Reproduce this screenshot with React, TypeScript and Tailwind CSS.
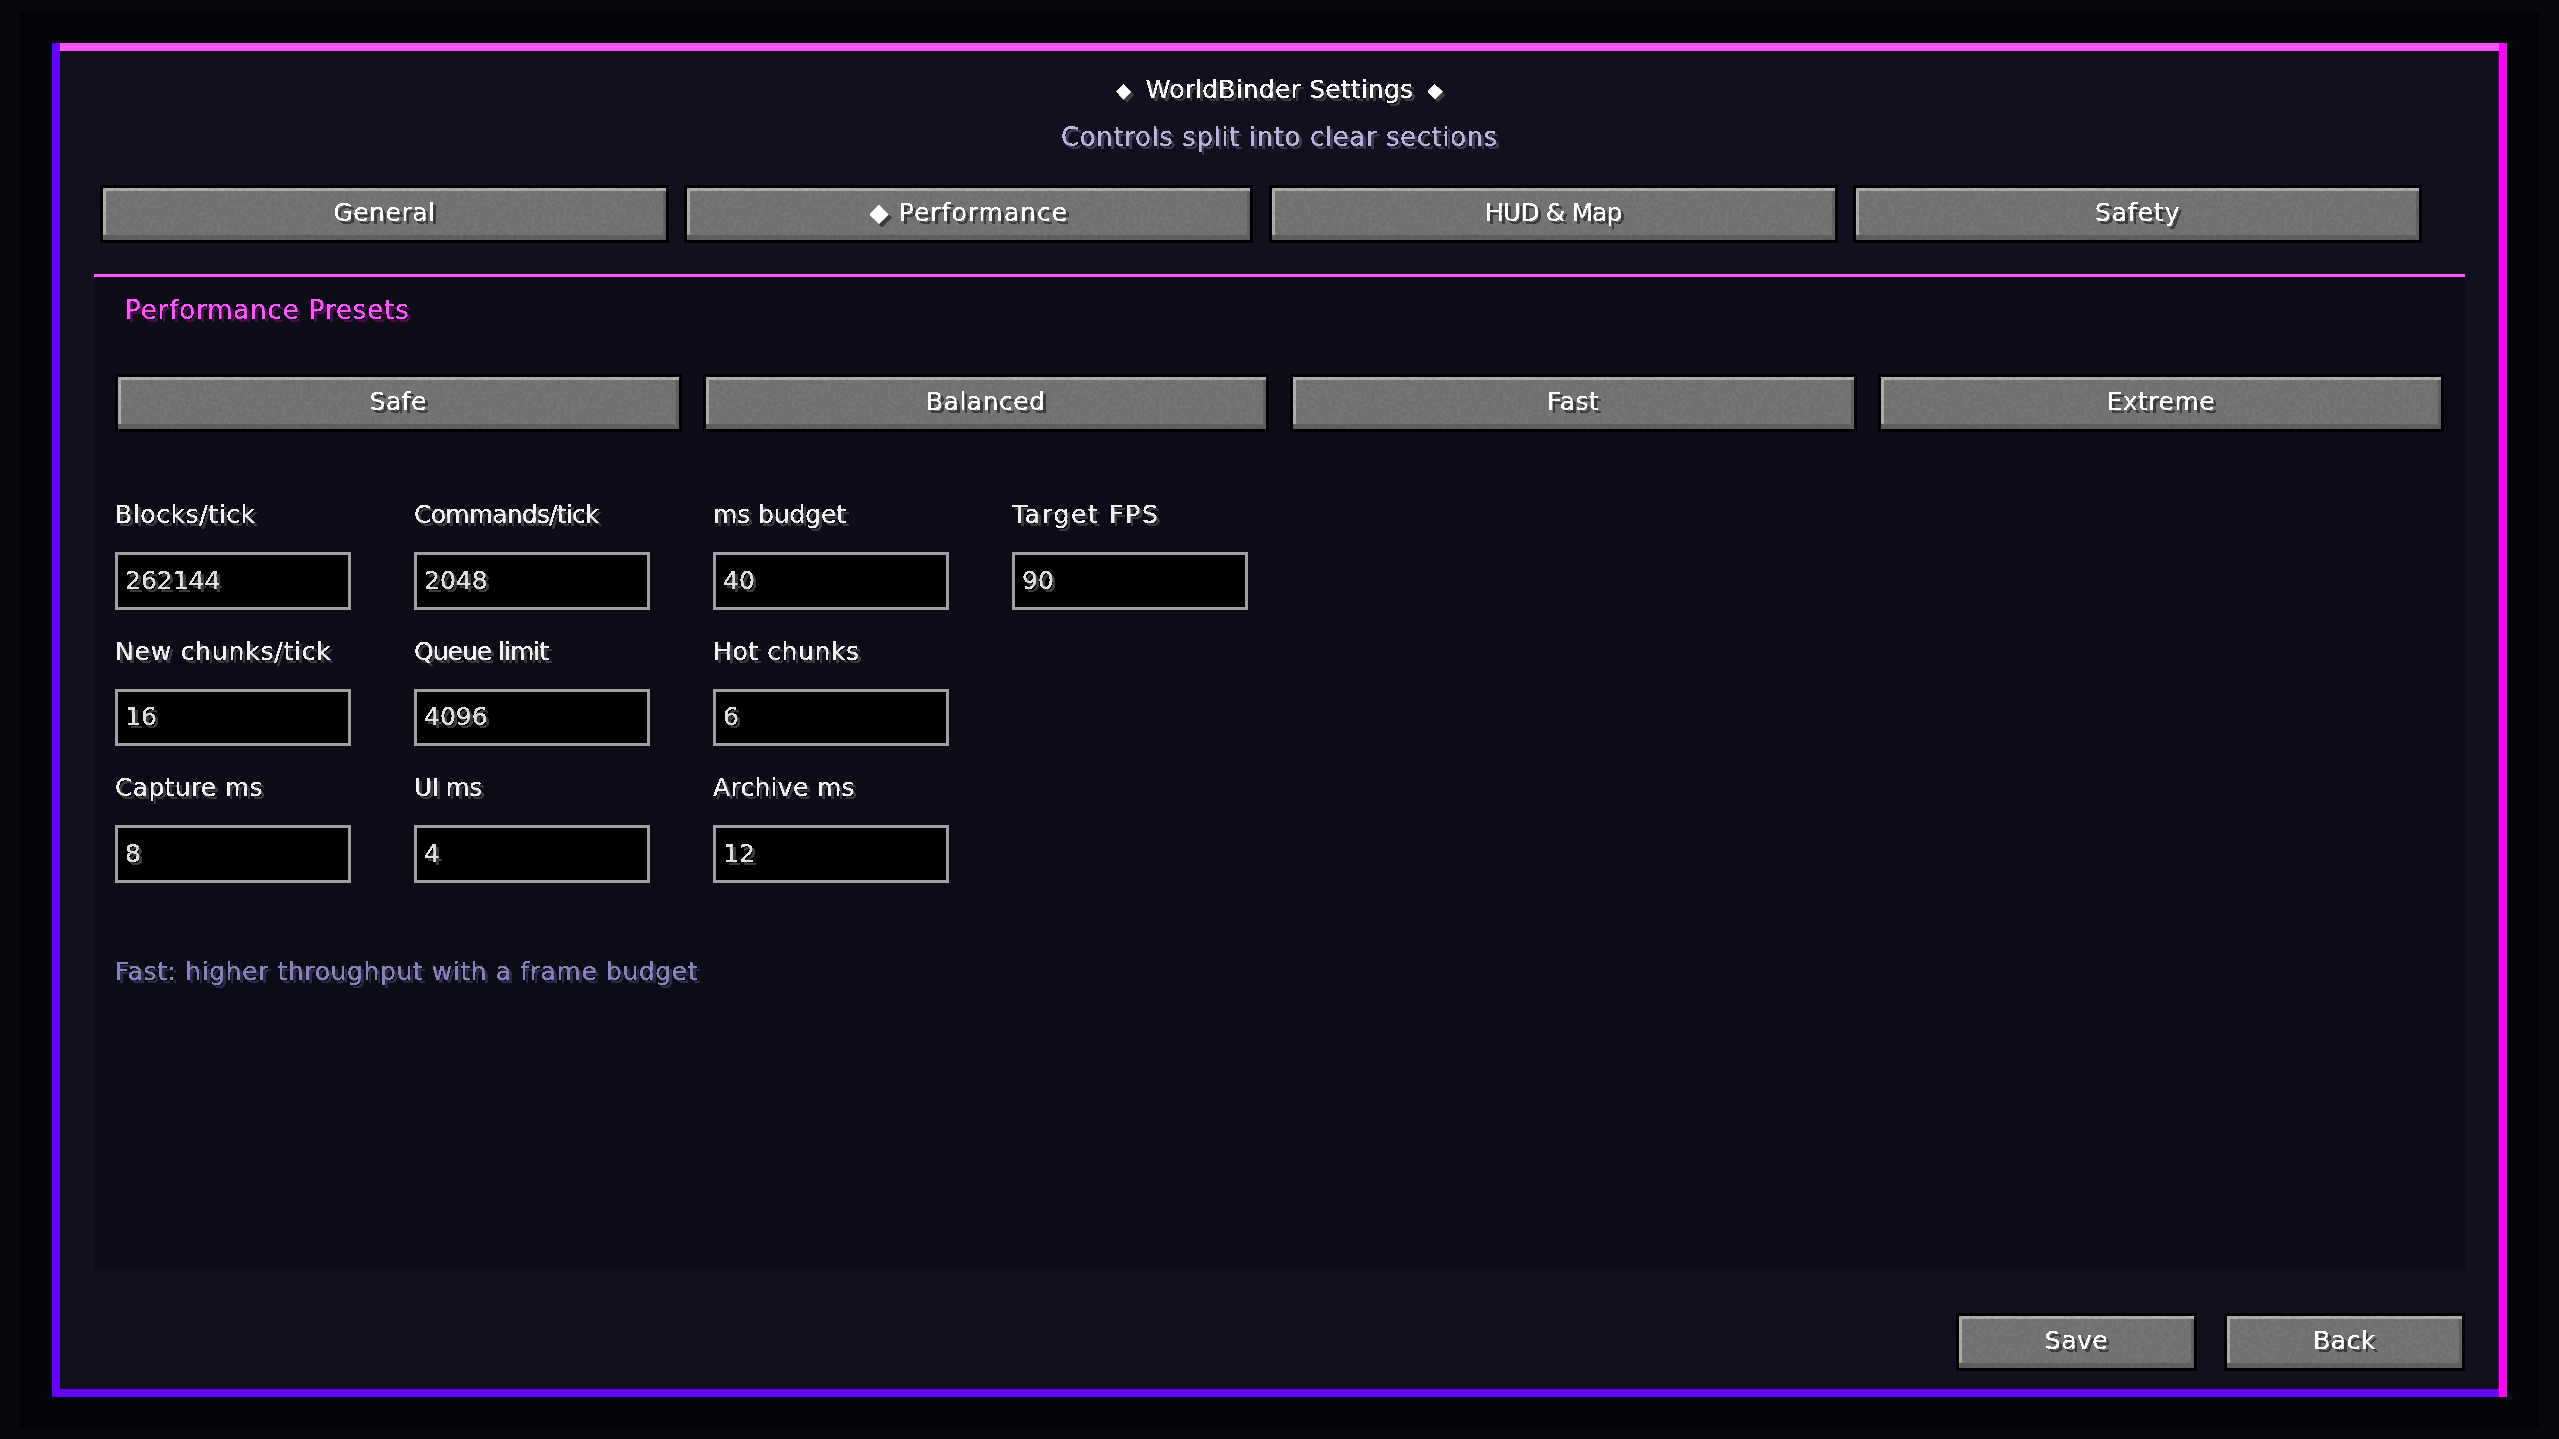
import React from 'react';

const font = "font-['DejaVu_Sans',sans-serif]";

const Noise: React.FC = () => (
  <svg className="absolute inset-0 w-full h-full pointer-events-none" aria-hidden="true">
    <rect width="100%" height="100%" filter="url(#stone)" opacity="0.1" />
  </svg>
);

const McButton: React.FC<{ label: string; className?: string; tracking?: string }> = ({ label, className, tracking = 'tracking-[0.5px]' }) => (
  <div className={`border-[3px] border-black bg-[#767676] h-[58px] relative flex items-center justify-center shadow-[inset_0_-5px_0_#626262,inset_0_3px_0_#b0b0b0,inset_3px_0_0_#b0b0b0,inset_-3px_0_0_#626262] ${className ?? ''}`}>
    <Noise />
    <span className={`relative text-white text-[25px] leading-[24px] mb-[3px] [filter:url(#crisp)] [text-shadow:3px_3px_0_#3c3c3c] ${tracking}`}>{label}</span>
  </div>
);

const Field: React.FC<{ label: string; value: string; tracking?: string }> = ({ label, value, tracking = 'tracking-[0.6px]' }) => (
  <div className="flex flex-col">
    <div className={`h-[50px] pt-[1px] text-[#f2f2f2] text-[25px] leading-[24px] [filter:url(#crisp)] [text-shadow:3px_3px_0_#3a3a3a] ${tracking}`}>{label}</div>
    <div className="h-[57.5px] border-[3px] border-[#a0a0a0] bg-black pl-[7px] flex items-center">
      <span className="text-[#e0e0e0] text-[25px] leading-[24px] [filter:url(#crisp)] [text-shadow:3px_3px_0_#3a3a3a]">{value}</span>
    </div>
  </div>
);

const tabs = [
  { label: 'General' },
  { label: '◆ Performance', tracking: 'tracking-[1px]' },
  { label: 'HUD & Map', tracking: 'tracking-[-0.9px]' },
  { label: 'Safety', tracking: 'tracking-[0.9px]' },
];
const presets = ['Safe', 'Balanced', 'Fast', 'Extreme'];
const fields: { label: string; value: string; tracking?: string }[] = [
  { label: 'Blocks/tick', value: '262144' },
  { label: 'Commands/tick', value: '2048', tracking: 'tracking-[-0.8px]' },
  { label: 'ms budget', value: '40', tracking: 'tracking-[-0.1px]' },
  { label: 'Target FPS', value: '90', tracking: 'tracking-[1.7px]' },
  { label: 'New chunks/tick', value: '16', tracking: 'tracking-[0.8px]' },
  { label: 'Queue limit', value: '4096', tracking: 'tracking-[-1px]' },
  { label: 'Hot chunks', value: '6' },
  { label: '', value: '' },
  { label: 'Capture ms', value: '8', tracking: 'tracking-[0.3px]' },
  { label: 'UI ms', value: '4', tracking: 'tracking-[-0.7px]' },
  { label: 'Archive ms', value: '12', tracking: 'tracking-[0.3px]' },
];

export default function App() {
  return (
    <div className={`${font} w-[2559px] h-[1439px] bg-[#08090d] pt-[12px] px-[20px] pb-[11px] overflow-hidden`}>
      <svg className="w-0 h-0 absolute" aria-hidden="true">
        <filter id="stone" x="0" y="0" width="100%" height="100%">
          <feTurbulence type="fractalNoise" baseFrequency="0.28" numOctaves="2" seed="4" />
          <feColorMatrix type="matrix" values="0 0 0 0 0  0 0 0 0 0  0 0 0 0 0  1.6 0 0 0 -0.5" />
        </filter>
        {/* hard alpha edge, so text reads like the blocky game font */}
        <filter id="crisp" x="-5%" y="-10%" width="115%" height="130%">
          <feComponentTransfer>
            <feFuncA type="discrete" tableValues="0 1 1" />
          </feComponentTransfer>
        </filter>
      </svg>

      <div className="h-full bg-[#03040a] pt-[31px] pl-[32px]">
        <div className="w-[2455px] h-[1354px] flex bg-[#10101f]">
          <div className="w-[8px] bg-[#6600ff]"></div>

          <div className="flex-1 flex flex-col border-t-[8px] border-t-[#ff55ff] border-b-[8px] border-b-[#6600ff]">
            <div className="h-[134px] flex flex-col items-center pt-[27px]">
              <div className="h-[47px] flex items-start gap-[14px] text-white text-[25px] leading-[24px] tracking-[0.2px] [filter:url(#crisp)] [text-shadow:3px_3px_0_#3c3c3c]">
                <span className="text-[20px]">◆</span>
                <span>WorldBinder Settings</span>
                <span className="text-[20px]">◆</span>
              </div>
              <div className="text-[#bcb4dc] text-[26px] leading-[24px] tracking-[0.6px] [filter:url(#crisp)] [text-shadow:3px_3px_0_#3a3850]">Controls split into clear sections</div>
            </div>

            <div className="flex gap-[15.4px] pl-[40px]">
              {tabs.map((t) => (
                <McButton key={t.label} label={t.label} tracking={t.tracking} className="w-[569px]" />
              ))}
            </div>

            <div className="mt-[31px] mx-[34px] h-[997px] border-t-[3px] border-t-[#ff55ff] bg-[#0b0c18] px-[21px] flex flex-col">
              <div className="pl-[10px] pt-[21px] h-[97px] text-[#ff55ff] text-[26px] leading-[24px] tracking-[0.9px] [filter:url(#crisp)] [text-shadow:3px_3px_0_#4a1048]">Performance Presets</div>

              <div className="flex gap-[21px]">
                {presets.map((p) => (
                  <McButton key={p} label={p} className="flex-1" />
                ))}
              </div>

              <div className="mt-[70px] grid grid-cols-[236px_236px_236px_236px] gap-x-[63px] gap-y-[29px]">
                {fields.map((f, i) =>
                  f.label ? <Field key={f.label} label={f.label} value={f.value} tracking={f.tracking} /> : <div key={i}></div>
                )}
              </div>

              <div className="mt-[77px] text-[#8b82bb] text-[25px] leading-[24px] tracking-[0.6px] [filter:url(#crisp)] [text-shadow:3px_3px_0_#2c2a48]">Fast: higher throughput with a frame budget</div>
            </div>

            <div className="mt-[42px] pr-[34px] flex justify-end gap-[27px]">
              <McButton label="Save" className="w-[241px]" />
              <McButton label="Back" className="w-[241px]" />
            </div>
          </div>

          <div className="w-[8px] bg-[#ff00ff]"></div>
        </div>
      </div>
    </div>
  );
}
